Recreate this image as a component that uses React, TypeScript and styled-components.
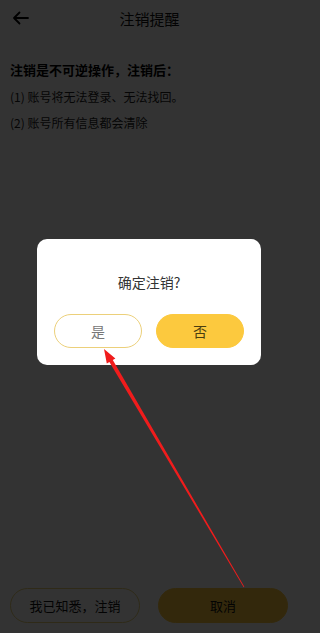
import React from "react";
import styled, { createGlobalStyle } from "styled-components";

const Global = createGlobalStyle`
  html, body { margin: 0; padding: 0; background: #fff; }
  body { font-family: "Noto Sans CJK SC", "Noto Sans", sans-serif; }
  * { box-sizing: border-box; }
`;

const Page = styled.div`
  width: 299px;
  height: 633px;
  display: flex;
  flex-direction: column;
  background: #fff;
  color: #000;
`;

const Header = styled.div`
  height: 36px;
  display: grid;
  grid-template-columns: 40px 1fr 40px;
  align-items: center;
`;

const BackBtn = styled.div`
  display: flex;
  align-items: center;
  padding-left: 12px;
  height: 100%;
`;

const Title = styled.div`
  text-align: center;
  font-size: 15px;
  color: #111;
`;

const Content = styled.div`
  flex: 1;
  padding: 20px 10px 0;
  display: flex;
  flex-direction: column;
`;

const Lead = styled.div`
  font-size: 13px;
  font-weight: 700;
  line-height: 28px;
`;

const Item = styled.div`
  font-size: 12px;
  line-height: 26px;
  color: #222;
`;

const Footer = styled.div`
  display: flex;
  justify-content: space-between;
  padding: 0 11px 10px 10px;
`;

const FooterBtn = styled.div<{ $primary?: boolean }>`
  width: 130px;
  height: 35px;
  border-radius: 18px;
  display: flex;
  align-items: center;
  justify-content: center;
  font-size: 13px;
  color: #111;
  background: ${(p) => (p.$primary ? "#fcc93e" : "#fff")};
  border: 1px solid ${(p) => (p.$primary ? "#fcc93e" : "#e8d27a")};
`;

const Overlay = styled.div`
  position: fixed;
  inset: 0;
  background: rgba(0, 0, 0, 0.8);
  display: flex;
  flex-direction: column;
  align-items: flex-start;
  padding: 239px 0 0 37px;
`;

const Dialog = styled.div`
  width: 224px;
  height: 126px;
  background: #fff;
  border-radius: 10px;
  display: flex;
  flex-direction: column;
  align-items: center;
  padding: 32px 17px 0;
`;

const DialogTitle = styled.div`
  font-size: 14px;
  color: #333;
  line-height: 22px;
`;

const DialogActions = styled.div`
  margin-top: 21px;
  width: 100%;
  display: flex;
  justify-content: space-between;
`;

const DialogBtn = styled.div<{ $primary?: boolean }>`
  width: 88px;
  height: 34px;
  border-radius: 17px;
  display: flex;
  align-items: center;
  justify-content: center;
  font-size: 14px;
  color: ${(p) => (p.$primary ? "#4a3d10" : "#777")};
  background: ${(p) => (p.$primary ? "#fcc93e" : "#fff")};
  border: 1px solid ${(p) => (p.$primary ? "#fcc93e" : "#ecd07a")};
`;

const ArrowSvg = styled.svg`
  position: fixed;
  left: 0;
  top: 0;
  width: 299px;
  height: 633px;
  pointer-events: none;
`;

export default function App() {
  return (
    <>
      <Global />
      <Page>
        <Header>
          <BackBtn>
            <svg width="17" height="14" viewBox="0 0 17 14">
              <path d="M16 7H2M7.5 1.5L2 7l5.5 5.5" fill="none" stroke="#000" strokeWidth="1.8" strokeLinecap="round" strokeLinejoin="round" />
            </svg>
          </BackBtn>
          <Title>注销提醒</Title>
          <div />
        </Header>
        <Content>
          <Lead>注销是不可逆操作，注销后：</Lead>
          <Item>(1) 账号将无法登录、无法找回。</Item>
          <Item>(2) 账号所有信息都会清除</Item>
        </Content>
        <Footer>
          <FooterBtn>我已知悉，注销</FooterBtn>
          <FooterBtn $primary>取消</FooterBtn>
        </Footer>
      </Page>
      <Overlay>
        <Dialog>
          <DialogTitle>确定注销?</DialogTitle>
          <DialogActions>
            <DialogBtn>是</DialogBtn>
            <DialogBtn $primary>否</DialogBtn>
          </DialogActions>
        </Dialog>
      </Overlay>
      <ArrowSvg viewBox="0 0 299 633">
        <polygon
          points="104,349 115.4,358.6 112.8,360.1 244.3,586.8 243.7,587.2 109.4,362.1 106.8,363.6"
          fill="#f01c1c"
        />
      </ArrowSvg>
    </>
  );
}
